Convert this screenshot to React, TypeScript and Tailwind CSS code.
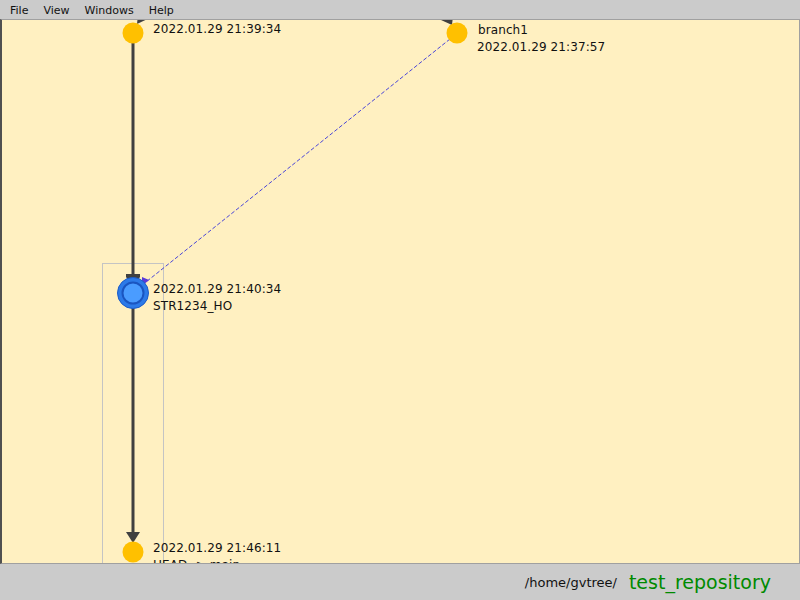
const font = { fontFamily: '"DejaVu Sans", sans-serif' }

function Label({ x, y, lines }: { x: number; y: number; lines: string[] }) {
  return (
    <div
      className="absolute text-[12px] leading-[17px] text-[#111] whitespace-nowrap tracking-[0.1px]"
      style={{ left: x - 2, top: y - 18 }}
    >
      {lines.map((l) => (
        <div key={l}>{l}</div>
      ))}
    </div>
  )
}

export default function App() {
  return (
    <div className="w-[800px] h-[600px] flex flex-col bg-[#cbcbcb] overflow-hidden" style={font}>
      <div className="h-[19px] flex items-center pt-[3px] pl-[2.5px] text-[11px] text-[#111]">
        <span className="px-[7.5px]">File</span>
        <span className="px-[7.5px]">View</span>
        <span className="px-[7.5px]">Windows</span>
        <span className="px-[7.5px]">Help</span>
      </div>

      <div className="relative h-[545px] bg-[#fff0c1] border-t border-r border-b border-[#a0a0a0] border-l-2 border-l-[#505050] overflow-hidden">
        <svg
          className="absolute left-0 top-0"
          width={797}
          height={543}
          viewBox="2 19 797 543"
        >
          <rect x={102.5} y={262.5} width={61} height={320} fill="none" stroke="#c4c4c4" strokeWidth={1} />

          {/* arrowheads coming from above */}
          <polygon points="137,23 138,14 156,14" fill="#404040" />
          <polygon points="441,15 441,19 452,24 453,15" fill="#404040" />

          {/* main line */}
          <line x1={133} y1={40} x2={133} y2={276} stroke="#404040" strokeWidth={3} />
          <polygon points="126,273 140,273 140,276 133,286 126,276" fill="#404040" />
          <line x1={133} y1={300} x2={133} y2={533} stroke="#404040" strokeWidth={3} />
          <polygon points="126,531 140,531 133,542" fill="#404040" />

          {/* merge link */}
          <line x1={450} y1={38} x2={146} y2={281} stroke="#4a46d8" strokeWidth={1} strokeDasharray="4 2" />
          <polygon points="149,279 142,276 142,285" fill="#5a3ad8" />

          <circle cx={133} cy={32} r={10.5} fill="#ffc000" />
          <circle cx={457} cy={32} r={10.5} fill="#ffc000" />
          <circle cx={133} cy={551} r={10.5} fill="#ffc000" />

          <circle cx={133} cy={292} r={15.5} fill="#2c7ae8" stroke="#1c5cc8" strokeWidth={1} />
          <circle cx={133} cy={292} r={10.5} fill="#4a9cff" stroke="#1a55c0" strokeWidth={2} />
        </svg>

        <Label x={153} y={19} lines={['2022.01.29 21:39:34']} />
        <Label x={478} y={20} lines={['branch1']} />
        <Label x={477} y={37} lines={['2022.01.29 21:37:57']} />
        <Label x={153} y={279} lines={['2022.01.29 21:40:34', 'STR1234_HO']} />
        <Label x={153} y={538} lines={['2022.01.29 21:46:11', 'HEAD -> main']} />
      </div>

      <div className="flex-1 flex items-center justify-end pt-[1px] pr-[29px] gap-[12px]">
        <span className="text-[13px] text-[#111]">/home/gvtree/</span>
        <span className="text-[19px] text-[#008a00]">test_repository</span>
      </div>
    </div>
  )
}
